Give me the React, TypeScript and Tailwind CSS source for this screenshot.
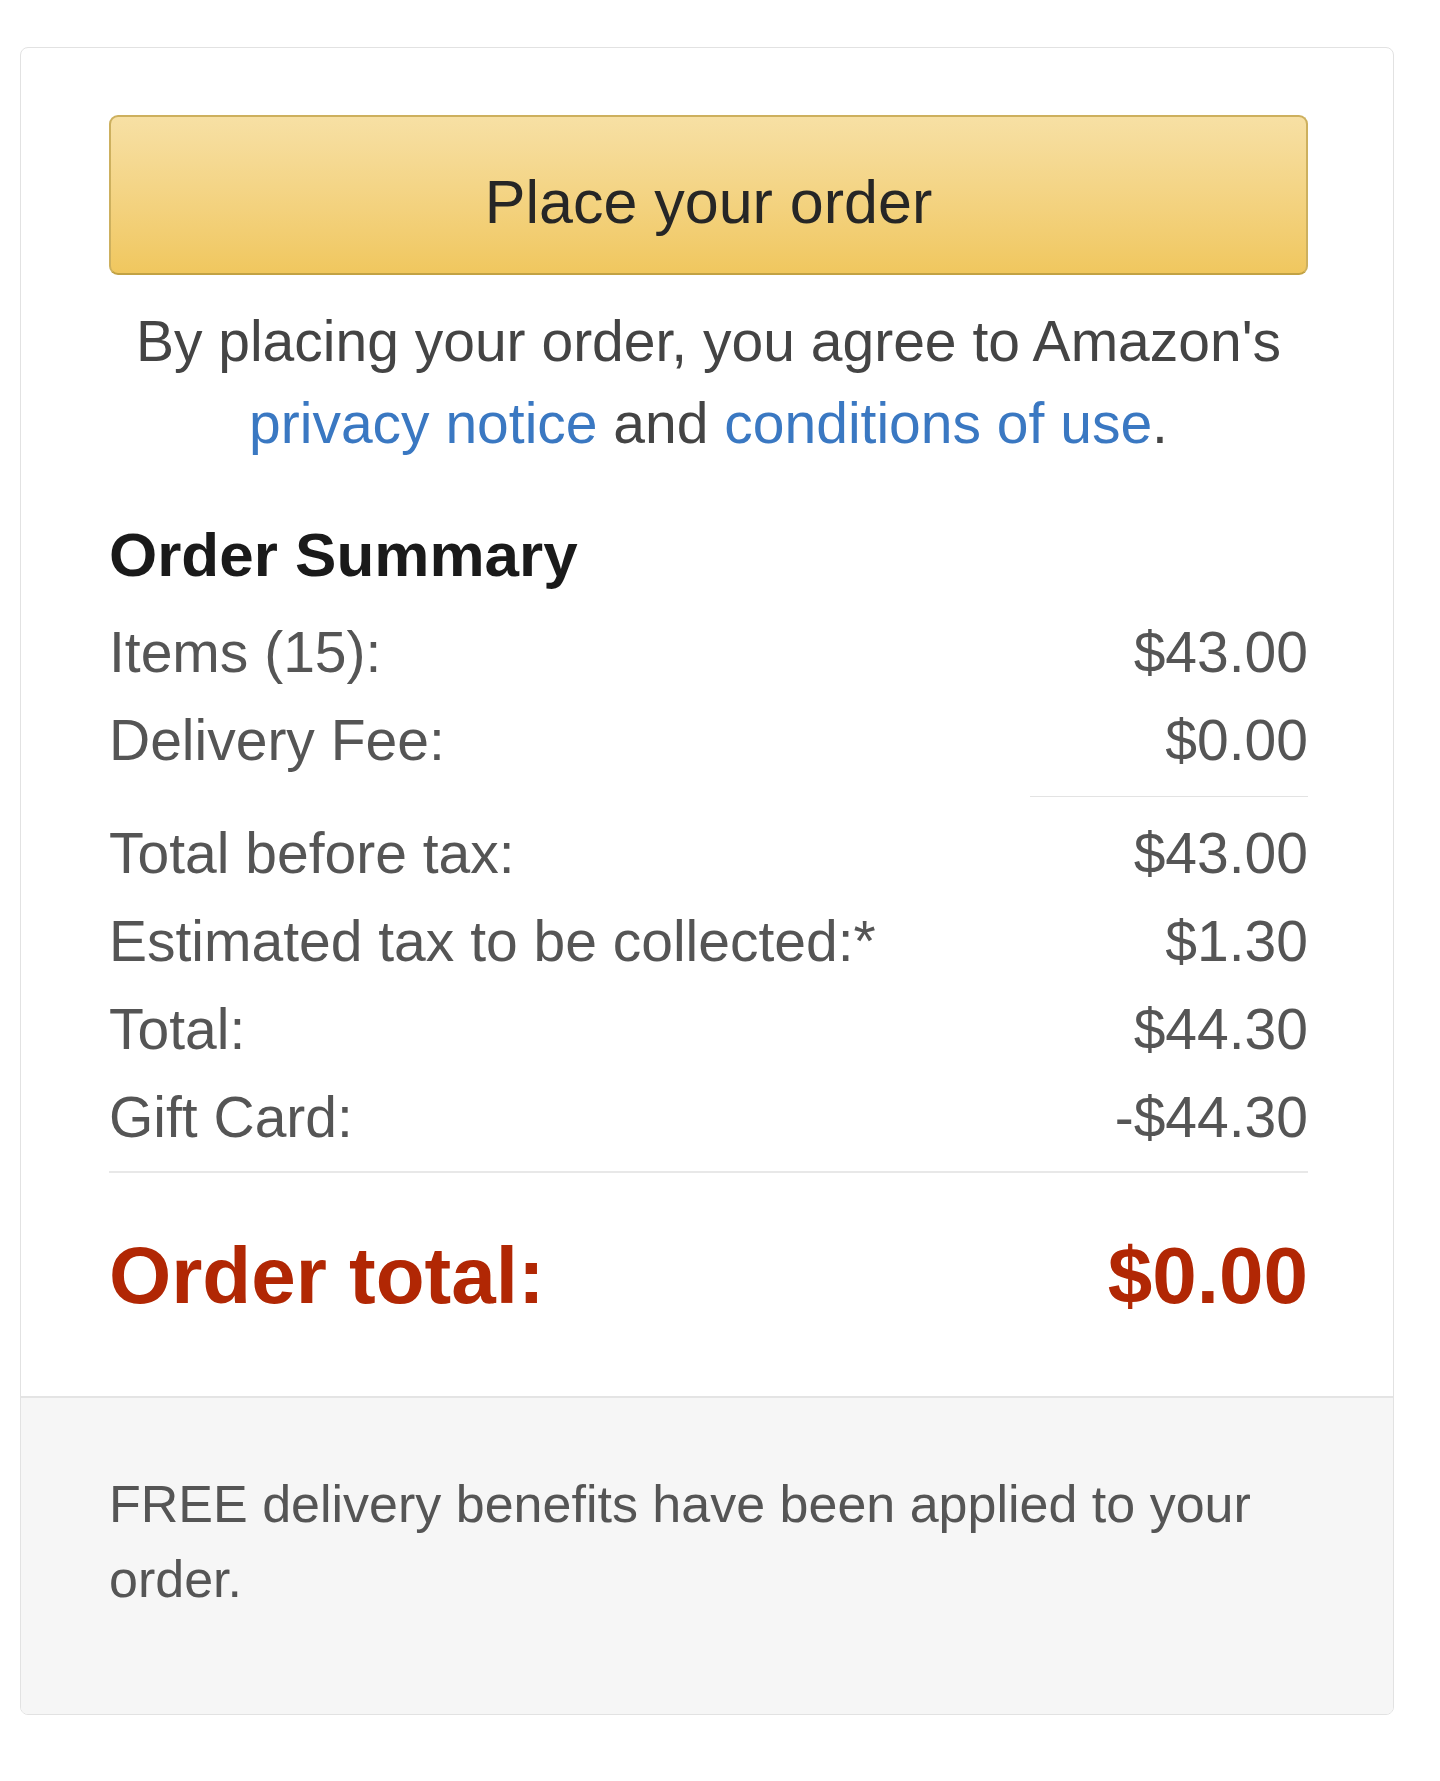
import React from "react";

const rows1 = [
  ["Items (15):", "$43.00"],
  ["Delivery Fee:", "$0.00"],
];
const rows2 = [
  ["Total before tax:", "$43.00"],
  ["Estimated tax to be collected:*", "$1.30"],
  ["Total:", "$44.30"],
  ["Gift Card:", "-$44.30"],
];

function Row({ label, value }: { label: string; value: string }) {
  return (
    <div className="flex justify-between text-[57px] leading-[88px] text-[#555555]">
      <span>{label}</span>
      <span>{value}</span>
    </div>
  );
}

export default function App() {
  return (
    <div className="min-h-[1781px] bg-white pt-[47px] pl-[20px] font-['Liberation_Sans',Arial,sans-serif]">
      <div className="w-[1374px] overflow-hidden rounded-[8px] border border-[#e2e2e2]">
        <div className="pl-[88px] pr-[85px] pt-[67px] pb-[70px]">
          <button className="flex h-[160px] w-full items-center justify-center rounded-[9px] border-2 border-[#cdb05e] border-b-[#c2a244] bg-gradient-to-b from-[#f7e0a4] to-[#f0c75e] pt-[16px] text-[61px] text-[#262626]">
            Place your order
          </button>
          <p className="mt-[25px] text-center text-[57px] leading-[82px] text-[#444444]">
            By placing your order, you agree to Amazon's
            <br />
            <a className="text-[#3a78c2]">privacy notice</a> and{" "}
            <a className="text-[#3a78c2]">conditions of use</a>.
          </p>
          <h2 className="mt-[51px] text-[62px] font-bold leading-[80px] text-[#1a1a1a]">
            Order Summary
          </h2>
          <div className="mt-[13px]">
            {rows1.map(([l, v]) => (
              <Row key={l} label={l} value={v} />
            ))}
          </div>
          <div className="mt-[12px] ml-auto h-px w-[278px] bg-[#e3e3e3]" />
          <div className="mt-[12px]">
            {rows2.map(([l, v]) => (
              <Row key={l} label={l} value={v} />
            ))}
          </div>
          <div className="mt-[10px] h-[2px] w-full bg-[#e8e8e8]" />
          <div className="mt-[53px] flex justify-between text-[80px] font-bold leading-[100px] text-[#b12704]">
            <span>Order total:</span>
            <span>$0.00</span>
          </div>
        </div>
        <div className="border-t-2 border-[#e4e4e4] bg-[#f6f6f6] pl-[88px] pr-[85px] pt-[69px] pb-[97px] text-[52px] leading-[75px] text-[#555555]">
          FREE delivery benefits have been applied to your order.
        </div>
      </div>
    </div>
  );
}
